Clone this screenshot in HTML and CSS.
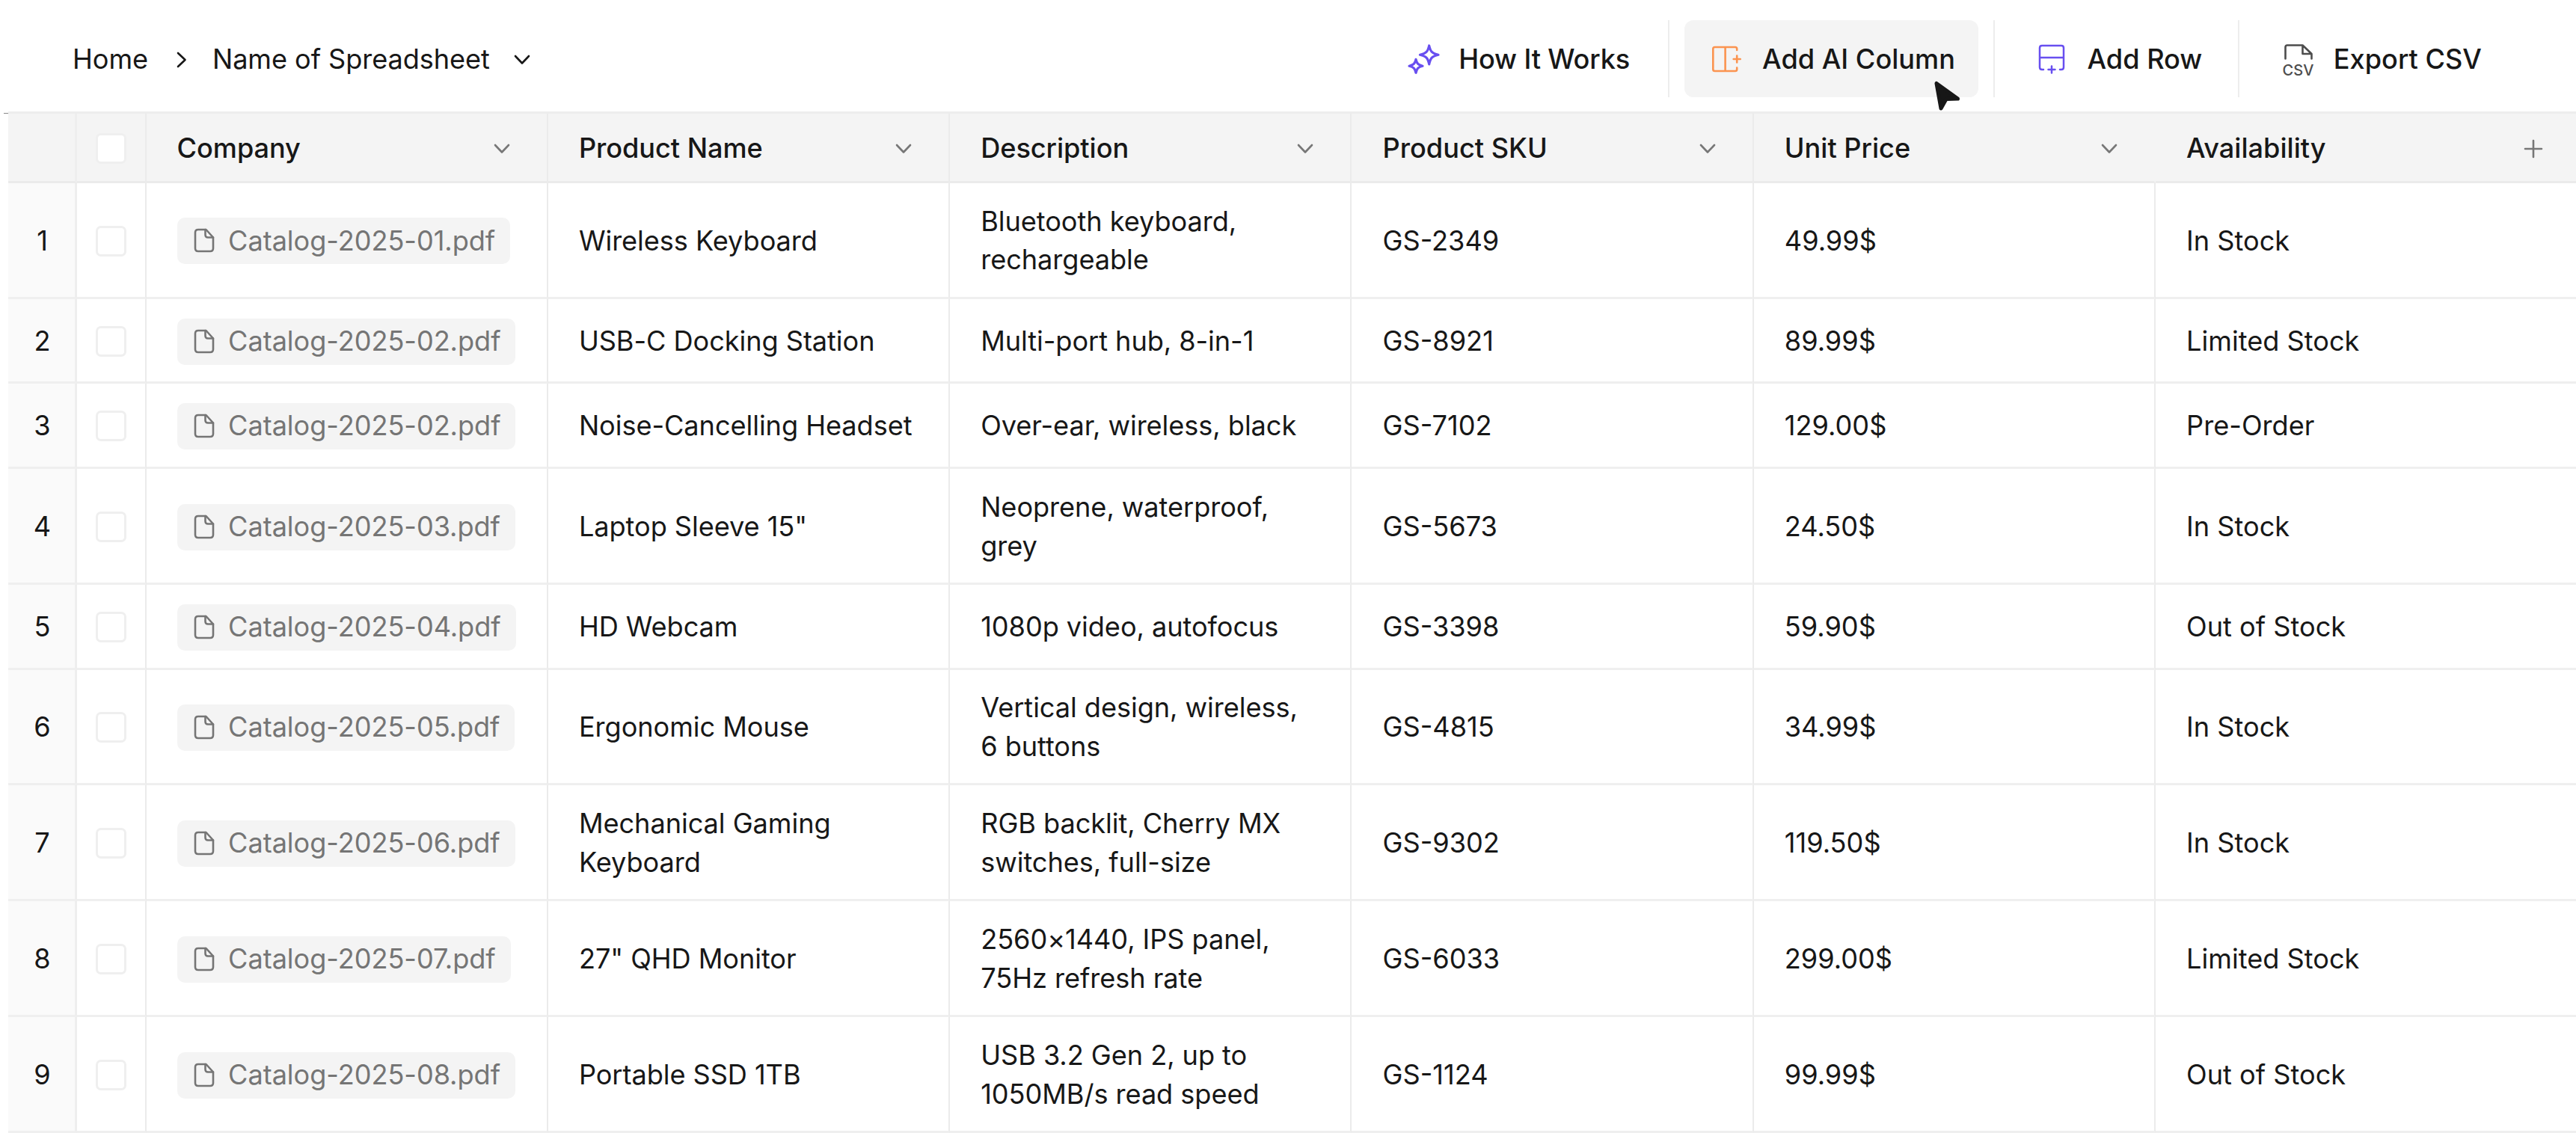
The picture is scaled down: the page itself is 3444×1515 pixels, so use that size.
FILE: index.html
```html
<!DOCTYPE html>
<html lang="en">
<head>
    <meta charset="UTF-8">
    <meta name="viewport" content="width=device-width, initial-scale=1.0">
    <title>Name of Spreadsheet</title>
    <link rel="stylesheet" href="styles.css">
</head>
<body>

    <!-- Shared icons -->
    <svg class="icon-defs" width="0" height="0">
        <symbol id="chevron-down" viewBox="0 0 22 14">
            <path d="M2 2L11 11.500L20 2"/>
        </symbol>
        <symbol id="file" viewBox="0 0 28 34">
            <path d="M15.500 2H6Q2 2 2 6V27Q2 31 6 31H22Q26 31 26 27V12.500L16.500 2Z"/>
            <path d="M15.500 2V9Q15.500 12.500 19 12.500H26"/>
        </symbol>
    </svg>

    <!-- Top Bar -->
    <header class="topbar">
        <nav class="breadcrumb">
            <a class="crumb">Home</a>
            <svg class="crumb-sep" viewBox="0 0 14 22"><path d="M2 2L11.500 11L2 20"/></svg>
            <a class="crumb">Name of Spreadsheet</a>
            <svg class="chevron"><use href="#chevron-down"/></svg>
        </nav>

        <div class="actions">
            <button class="action how">
                <svg class="action-icon sparkle" viewBox="0 0 46 46">
                    <path d="M28.700 5C30.500 13 32.500 15.500 41 17.300C32.500 19.300 30.500 21.500 28.700 30C26.900 21.500 24.900 19.300 16.400 17.300C24.900 15.500 26.900 13 28.700 5Z"/>
                    <path d="M11 23.300C12.300 29 14 31 20 32.300C14 33.700 12.300 35.500 11 41.300C9.700 35.500 8 33.700 2 32.300C8 31 9.700 29 11 23.300Z"/>
                </svg>
                <span>How It Works</span>
            </button>
            <span class="divider"></span>
            <button class="action column active">
                <svg class="action-icon orange" viewBox="0 0 46 46">
                    <path d="M40.200 11V9.300Q40.200 7 37.900 7H10.600Q8.300 7 8.300 9.300V36.700Q8.300 39 10.600 39H37.900Q40.200 39 40.200 36.700V34.500M24.600 7V39M40.200 18.500V27.500M35.700 23H44.700"/>
                </svg>
                <span>Add AI Column</span>
            </button>
            <span class="divider"></span>
            <button class="action add-row">
                <svg class="action-icon purple" viewBox="0 0 46 46">
                    <path d="M12 37H10Q7 37 7 34V8Q7 5 10 5H36Q39 5 39 8V34Q39 37 36 37H34M7 21H39M23 32.500V41.500M18.500 37H27.500"/>
                </svg>
                <span>Add Row</span>
            </button>
            <span class="divider"></span>
            <button class="action export">
                <svg class="action-icon csv" viewBox="0 0 46 46">
                    <path d="M6.500 22.500V7Q6.500 4.500 9 4.500H29.500L41.500 16V22.500M29.500 4.500V16H41.500"/>
                    <text x="2.500" y="44.500" textLength="42">CSV</text>
                </svg>
                <span>Export CSV</span>
            </button>
        </div>

        <svg class="cursor" viewBox="0 0 36 42">
            <path d="M4 3.500L10 37L17 24.500L32.500 24Z"/>
        </svg>
    </header>

    <!-- Spreadsheet -->
    <main class="sheet" id="sheet">
        <div class="row head">
            <div class="cell num"></div>
            <div class="cell check"><span class="box"></span></div>
            <div class="cell">Company <svg class="chevron"><use href="#chevron-down"/></svg></div>
            <div class="cell">Product Name <svg class="chevron"><use href="#chevron-down"/></svg></div>
            <div class="cell">Description <svg class="chevron"><use href="#chevron-down"/></svg></div>
            <div class="cell">Product SKU <svg class="chevron"><use href="#chevron-down"/></svg></div>
            <div class="cell">Unit Price <svg class="chevron"><use href="#chevron-down"/></svg></div>
            <div class="cell">Availability <svg class="plus" viewBox="0 0 24 24"><path d="M12 1V23M1 12H23"/></svg></div>
        </div>
    </main>

    <script>
        const products = [
            ["01", "Wireless Keyboard", "Bluetooth keyboard,<br>rechargeable", "GS-2349", "49.99$", "In Stock"],
            ["02", "USB-C Docking Station", "Multi-port hub, 8-in-1", "GS-8921", "89.99$", "Limited Stock"],
            ["02", "Noise-Cancelling Headset", "Over-ear, wireless, black", "GS-7102", "129.00$", "Pre-Order"],
            ["03", "Laptop Sleeve 15\"", "Neoprene, waterproof,<br>grey", "GS-5673", "24.50$", "In Stock"],
            ["04", "HD Webcam", "1080p video, autofocus", "GS-3398", "59.90$", "Out of Stock"],
            ["05", "Ergonomic Mouse", "Vertical design, wireless,<br>6 buttons", "GS-4815", "34.99$", "In Stock"],
            ["06", "Mechanical Gaming<br>Keyboard", "RGB backlit, Cherry MX<br>switches, full-size", "GS-9302", "119.50$", "In Stock"],
            ["07", "27\" QHD Monitor", "2560×1440, IPS panel,<br>75Hz refresh rate", "GS-6033", "299.00$", "Limited Stock"],
            ["08", "Portable SSD 1TB", "USB 3.2 Gen 2, up to<br>1050MB/s read speed", "GS-1124", "99.99$", "Out of Stock"]
        ];

        let rows = "";
        products.forEach(function(item, i) {
            const [file, ...values] = item;
            rows += `<div class="row">
                <div class="cell num">${i + 1}</div>
                <div class="cell check"><span class="box"></span></div>
                <div class="cell"><span class="file"><svg class="file-icon"><use href="#file"/></svg>Catalog-2025-${file}.pdf</span></div>
                ${values.map(v => `<div class="cell"><span>${v}</span></div>`).join("")}
            </div>`;
        });
        document.getElementById("sheet").innerHTML += rows;
    </script>

</body>
</html>
```

FILE: styles.css
```css
* {
    box-sizing: border-box;
}

body {
    margin: 0;
    height: 1515px;
    overflow: hidden;
    background: #fff;
    color: #171717;
    font-family: Inter, "Liberation Sans", sans-serif;
    font-size: 36.17px;
    line-height: 51.67px;
}

svg {
    flex: none;
    overflow: visible;
    fill: none;
    stroke: currentColor;
    stroke-width: 2.6;
    stroke-linecap: round;
    stroke-linejoin: round;
}

.icon-defs {
    position: absolute;
}

/* Top bar */
.topbar {
    position: relative;
    display: flex;
    justify-content: space-between;
    height: 149px;
    padding: 27px 95px 19px 97px;
}

.breadcrumb {
    display: flex;
    align-items: center;
    padding-top: 2px;
    letter-spacing: -0.08px;
}

.crumb-sep {
    width: 14px;
    height: 22px;
    margin: 0 34px 0 38px;
}

.chevron {
    width: 22px;
    height: 14px;
}

.breadcrumb .chevron {
    margin-left: 32px;
}

.actions {
    display: flex;
}

.action {
    display: flex;
    align-items: center;
    height: 103px;
    padding: 0 31px 0 30px;
    border: none;
    border-radius: 12px;
    background: none;
    color: inherit;
    font: inherit;
    font-weight: 500;
    white-space: nowrap;
}

.action span {
    padding-top: 3px;
}

.action.active {
    background: #f4f4f4;
}

.how {
    gap: 22.5px;
    letter-spacing: -0.15px;
}

.column {
    gap: 28px;
}

.add-row {
    gap: 24.5px;
    padding-left: 33px;
    padding-right: 27.5px;
}

.export {
    gap: 25px;
    padding-left: 35px;
}

.divider {
    width: 2px;
    margin: 0 20px;
    background: #ededed;
}

.action-icon {
    width: 46px;
    height: 46px;
}

.sparkle {
    color: #684ff0;
    stroke-width: 3.2;
}

.orange {
    color: #fb9450;
}

.purple {
    color: #684ff0;
    stroke-width: 2.5;
}

.csv {
    color: #4d4d4d;
}

.csv text {
    fill: currentColor;
    stroke: none;
    font-size: 20px;
    font-weight: 500;
}

.cursor {
    position: absolute;
    left: 2585px;
    top: 108px;
    width: 36px;
    height: 42px;
    z-index: 1;
    color: #171717;
    fill: #171717;
    stroke-width: 5;
}

/* Table */
.sheet {
    position: relative;
    margin-left: 11px;
    border-top: 3px solid #ededed;
}

.sheet::before {
    content: "";
    position: absolute;
    left: -6px;
    top: -1px;
    width: 6px;
    height: 1px;
    background: #888;
}

.row {
    display: grid;
    grid-template-columns: 92px 92.6px repeat(5, 537.3px) 1fr;
    min-height: 113.6px;
}

.cell {
    display: flex;
    align-items: center;
    padding: 25.8px 41px 22.75px;
    border-right: 2px solid #ebebeb;
    border-bottom: 3px solid #efefef;
    letter-spacing: -0.06px;
    white-space: nowrap;
}

.cell:nth-child(n+6) {
    letter-spacing: 0;
}

.cell:last-child {
    border-right: none;
}

.cell.num,
.cell.check {
    justify-content: center;
    padding-left: 0;
    padding-right: 0;
}

.cell.num {
    padding-left: 2px;
    background: #fafafa;
    border-right: 3px solid #eee;
}

.cell.check {
    padding-top: 25px;
    padding-left: 1px;
}

.box {
    width: 41px;
    height: 41px;
    border: 3px solid #efefef;
    border-radius: 7px;
    background: #fff;
}

/* Header row */
.head {
    min-height: 93px;
    background: #f4f4f4;
    font-weight: 500;
}

.head .cell {
    justify-content: space-between;
    padding-top: 3px;
    padding-bottom: 0;
    border-bottom-color: #ebebeb;
}

.head .cell.check {
    justify-content: center;
}

.head .cell.num {
    background: none;
}

.head .cell:nth-child(7) {
    border-right-color: transparent;
}

.head .chevron {
    margin-right: 8px;
    color: #777;
}

.plus {
    width: 24px;
    height: 24px;
    margin-right: 4px;
    color: #777;
}

.file {
    display: flex;
    align-items: center;
    gap: 18px;
    height: 62px;
    margin: -6px 0;
    padding: 0 20px 0 22.5px;
    border-radius: 10px;
    background: #f4f4f4;
    color: #757575;
    letter-spacing: -0.06px;
}

.file-icon {
    width: 28px;
    height: 34px;
}
```
